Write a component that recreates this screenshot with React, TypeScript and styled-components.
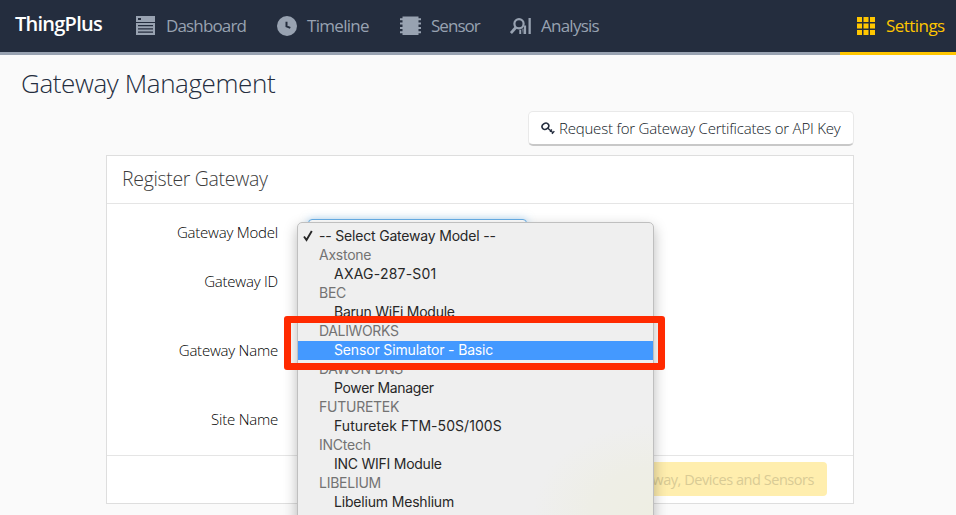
import React from "react";
import styled, { createGlobalStyle, css } from "styled-components";

const GlobalStyle = createGlobalStyle`
  * { box-sizing: border-box; }
  html, body { margin: 0; height: 100%; overflow: hidden; }
  body {
    background: #fafafa;
    color: #242d3e;
    font-family: "Open Sans", "Noto Sans", sans-serif;
  }
`;

const Page = styled.div`
  height: 515px;
  overflow: hidden;
`;

const NavBar = styled.header`
  display: flex;
  height: 55px;
  background: #242d3e;
`;

const NavRest = styled.div`
  display: flex;
  flex: 1;
  border-bottom: 3px solid #98a2b1;
`;

const Brand = styled.div`
  width: 136px;
  padding: 10px 0 0 15px;
  font-size: 20px;
  line-height: 28px;
  font-weight: 600;
  letter-spacing: -0.75px;
  color: #fff;
  white-space: nowrap;
`;

const NavItem = styled.a<{ $width: number; $spacing?: number; $active?: boolean }>`
  display: flex;
  align-items: center;
  gap: 10px;
  width: ${(p) => p.$width}px;
  height: 51px;
  font-size: 17px;
  letter-spacing: ${(p) => p.$spacing ?? -0.85}px;
  color: #98a2b1;
  white-space: nowrap;
  svg { flex: none; position: relative; top: 0.5px; }
  ${(p) =>
    p.$active &&
    css`
      height: 55px;
      padding: 0 0 1px 17px;
      border-bottom: 3px solid #ffc600;
      color: #ffc600;
    `}
`;

const Main = styled.main`
  width: 854px;
  padding-top: 11px;
`;

const Title = styled.h1`
  margin: 0 0 0 21px;
  height: 45px;
  font-size: 26px;
  line-height: 34px;
  font-weight: 300;
  letter-spacing: -0.39px;
  white-space: nowrap;
`;

const Actions = styled.div`
  display: flex;
  justify-content: flex-end;
  height: 44px;
`;

const RequestButton = styled.button`
  display: flex;
  align-items: center;
  gap: 4px;
  width: 326px;
  height: 35px;
  padding: 0 0 0 12px;
  border: 1px solid #e9e9e9;
  border-bottom: 2px solid #c8c8c8;
  border-radius: 5px;
  background: #fff;
  color: #111827;
  font-family: inherit;
  font-size: 15px;
  font-weight: 300;
  letter-spacing: -0.21px;
  white-space: nowrap;
`;

const Panel = styled.section`
  width: 748px;
  height: 349px;
  margin-left: 106px;
  border: 1px solid #dedede;
  background: #fff;
`;

const PanelHeader = styled.h2`
  margin: 0;
  height: 48px;
  padding-left: 15px;
  border-bottom: 1px solid #e5e5e5;
  color: #3c3c3c;
  font-size: 19.5px;
  line-height: 46px;
  font-weight: 300;
  letter-spacing: -0.33px;
`;

const Form = styled.form`
  height: 252px;
  padding-top: 15px;
  border-bottom: 1px solid #e5e5e5;
`;

const Field = styled.div<{ $height: number }>`
  display: flex;
  height: ${(p) => p.$height}px;
`;

const Label = styled.label`
  width: 171px;
  text-align: right;
  font-size: 15px;
  line-height: 27px;
  font-weight: 300;
  letter-spacing: -0.22px;
  color: #000;
`;

const SelectBox = styled.div`
  position: relative;
  width: 219px;
  height: 34px;
  margin-left: 30px;
  border: 1px solid #66afe9;
  border-radius: 4px;
  box-shadow: 0 0 8px rgba(102, 175, 233, 0.5);
  background: #fff;
`;

const Menu = styled.ul`
  position: absolute;
  z-index: 2;
  top: 2px;
  left: -12px;
  width: 357px;
  height: 310px;
  margin: 0;
  padding: 4px 0 0;
  list-style: none;
  border: 1px solid #bfbfbf;
  border-radius: 5px;
  background: radial-gradient(ellipse 120px 90px at 355px 290px, #eeeee3 0, #eeeee6 50%, #efefef 100%);
  box-shadow: 0 5px 14px rgba(0, 0, 0, 0.28);
  font-family: Inter, sans-serif;
  font-size: 14px;
  line-height: 17px;
  color: #272727;
`;

const Option = styled.li<{ $kind?: "group" | "child"; $selected?: boolean; $spacing?: number }>`
  position: relative;
  height: 19px;
  padding-left: ${(p) => (p.$kind === "child" ? 36 : 21)}px;
  letter-spacing: ${(p) => p.$spacing ?? -0.25}px;
  white-space: nowrap;
  ${(p) => p.$kind === "group" && "color: #737373;"}
  ${(p) => p.$selected && "background: #4499ff; color: #fff;"}
`;

const CheckMark = styled.svg`
  position: absolute;
  left: 5px;
  top: 3px;
`;

const Highlight = styled.div`
  position: absolute;
  z-index: 3;
  top: 96px;
  left: -25px;
  width: 381px;
  height: 54px;
  border: 7px solid #ff2a00;
  border-radius: 3px;
`;

const PanelFooter = styled.footer`
  display: flex;
  justify-content: flex-end;
  padding: 6px 26px 0 0;
`;

const SubmitButton = styled.button`
  width: 262px;
  height: 34px;
  padding: 0 13px 0 0;
  border: 0;
  border-radius: 4px;
  background: #ffeeae;
  color: #d9cb95;
  text-align: right;
  font-family: inherit;
  font-size: 14.5px;
  letter-spacing: -0.45px;
  white-space: nowrap;
`;

const DashboardIcon = () => (
  <svg width="20" height="20" viewBox="0 0 20 20">
    <path fill="#98a2b1" d="M0 0h19v6H0zM0 7h19v12H0z" />
    <path fill="#242d3e" d="M2 2h3v2H2zM2 9h15v1.2H2zM2 12.3h15v1.2H2zM2 15.6h15v1.2H2z" />
  </svg>
);

const ClockIcon = () => (
  <svg width="20" height="20" viewBox="0 0 20 20">
    <circle cx="10" cy="10" r="10" fill="#98a2b1" />
    <path d="M9.5 5.8v4.6l3.8 1.5" fill="none" stroke="#242d3e" strokeWidth="2" />
  </svg>
);

const ChipIcon = () => (
  <svg width="21" height="20" viewBox="0 0 21 20" fill="#98a2b1">
    <path d="M2.5 0.5h16v18.5h-16z" />
    <path d="M0 2.3h21v2H0zM0 6.6h21v2H0zM0 10.9h21v2H0zM0 15.2h21v2H0z" />
  </svg>
);

const AnalysisIcon = () => (
  <svg width="21" height="18" viewBox="0 0 21 18">
    <circle cx="9" cy="6.8" r="4.6" fill="none" stroke="#98a2b1" strokeWidth="2.2" />
    <path d="M6 10.3L.9 16" stroke="#98a2b1" strokeWidth="2.8" />
    <path d="M9.3 12.7h1.9V17H9.3zM13.9 8.6h2.2V17h-2.2zM18.5 1h2.3v16h-2.3z" fill="#98a2b1" />
    <path d="M11.5 11l2.4 1v5h-1z" fill="#98a2b1" opacity=".5" />
  </svg>
);

const GridIcon = () => (
  <svg width="19" height="19" viewBox="0 0 19 19">
    {[0, 6.5, 13].map((y) =>
      [0, 6.5, 13].map((x) => <rect key={`${x}-${y}`} x={x} y={y} width="5" height="5" fill="#ffc600" />)
    )}
  </svg>
);

const KeyIcon = () => (
  <svg width="14" height="13" viewBox="0 0 14 13" fill="none" stroke="#242d3e">
    <ellipse cx="4.4" cy="4.3" rx="3.5" ry="2.9" strokeWidth="1.6" transform="rotate(-35 4.4 4.3)" />
    <path d="M6.6 6L12.2 11M9 9.8l1.9-2.3M11 11.9l2.3-2.8" strokeWidth="1.4" />
  </svg>
);

type Row = {
  text: string;
  kind?: "group" | "child";
  selected?: boolean;
  checked?: boolean;
  spacing?: number;
};

const rows: Row[] = [
  { text: "-- Select Gateway Model --", checked: true, spacing: -0.19 },
  { text: "Axstone", kind: "group" },
  { text: "AXAG-287-S01", kind: "child", spacing: 0.22 },
  { text: "BEC", kind: "group" },
  { text: "Barun WiFi Module", kind: "child" },
  { text: "DALIWORKS", kind: "group", spacing: -0.35 },
  { text: "Sensor Simulator - Basic", kind: "child", selected: true, spacing: -0.15 },
  { text: "DAWON DNS", kind: "group", spacing: -0.35 },
  { text: "Power Manager", kind: "child", spacing: -0.35 },
  { text: "FUTURETEK", kind: "group" },
  { text: "Futuretek FTM-50S/100S", kind: "child", spacing: 0.06 },
  { text: "INCtech", kind: "group" },
  { text: "INC WIFI Module", kind: "child" },
  { text: "LIBELIUM", kind: "group" },
  { text: "Libelium Meshlium", kind: "child", spacing: -0.18 },
];

export default function App() {
  return (
    <Page>
      <GlobalStyle />
      <NavBar>
        <NavRest>
          <Brand>ThingPlus</Brand>
          <NavItem $width={141}><DashboardIcon />Dashboard</NavItem>
          <NavItem $width={123} $spacing={-0.7}><ClockIcon />Timeline</NavItem>
          <NavItem $width={110} $spacing={-0.95}><ChipIcon />Sensor</NavItem>
          <NavItem $width={100} $spacing={-0.75}><AnalysisIcon />Analysis</NavItem>
        </NavRest>
        <NavItem $width={116} $spacing={-0.55} $active><GridIcon />Settings</NavItem>
      </NavBar>
      <Main>
        <Title>Gateway Management</Title>
        <Actions>
          <RequestButton type="button"><KeyIcon />Request for Gateway Certificates or API Key</RequestButton>
        </Actions>
        <Panel>
          <PanelHeader>Register Gateway</PanelHeader>
          <Form>
            <Field $height={49}>
              <Label>Gateway Model</Label>
              <SelectBox>
                <Menu>
                  {rows.map((r) => (
                    <Option key={r.text} $kind={r.kind} $selected={r.selected} $spacing={r.spacing}>
                      {r.checked && (
                        <CheckMark width="10" height="12" viewBox="0 0 10 12">
                          <path d="M1 6.5L3.5 10 8.8 1" fill="none" stroke="#272727" strokeWidth="1.9" />
                        </CheckMark>
                      )}
                      {r.text}
                    </Option>
                  ))}
                </Menu>
                <Highlight />
              </SelectBox>
            </Field>
            <Field $height={69}><Label>Gateway ID</Label></Field>
            <Field $height={69}><Label>Gateway Name</Label></Field>
            <Field $height={49}><Label>Site Name</Label></Field>
          </Form>
          <PanelFooter>
            <SubmitButton type="button">Save Gateway, Devices and Sensors</SubmitButton>
          </PanelFooter>
        </Panel>
      </Main>
    </Page>
  );
}
